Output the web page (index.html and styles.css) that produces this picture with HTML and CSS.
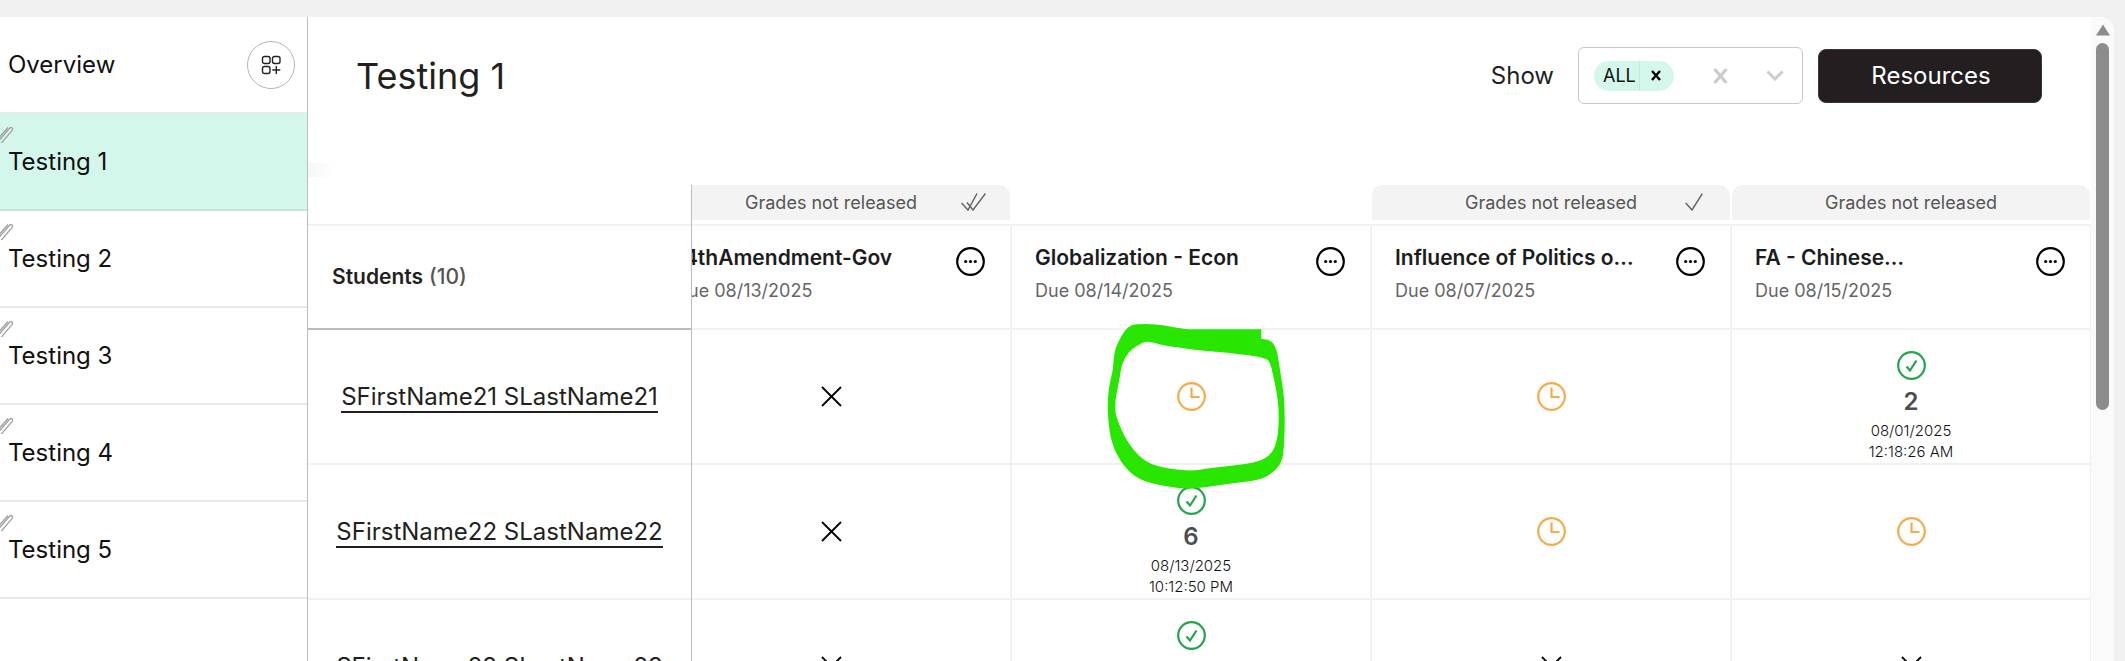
FILE: index.html
```html
<!DOCTYPE html>
<html lang="en">
<head>
<meta charset="utf-8">
<title>Testing 1</title>
<link rel="stylesheet" href="styles.css">
</head>
<body>
<svg width="0" height="0" class="defs">
  <symbol id="pin" viewBox="0 0 14 16"><path d="M-2 14.5 L9.600 1.200 a1.700 1.700 0 0 1 2.600 2.200 L1 16.500 M-4 14 L8 .5" fill="none" stroke="#a0a0a0" stroke-width="1.300"/></symbol>
  <symbol id="clock" viewBox="0 0 29 29"><circle cx="14.5" cy="14.5" r="13.300" fill="none" stroke="#f5ab4c" stroke-width="2.200"/><path d="M14.500 5.500v9.500h8" fill="none" stroke="#f5ab4c" stroke-width="2.200"/></symbol>
  <symbol id="done" viewBox="0 0 29 29"><circle cx="14.5" cy="14.5" r="13.300" fill="none" stroke="#22a54b" stroke-width="2.200"/><path d="M9.500 15.500l3.500 4L19.500 9.500" fill="none" stroke="#22a54b" stroke-width="2.200"/></symbol>
  <symbol id="no" viewBox="0 0 21 21"><path d="M1 1l19 19M20 1L1 20" fill="none" stroke="#000" stroke-width="1.800"/></symbol>
  <symbol id="more" viewBox="0 0 29 29"><circle cx="14.5" cy="14.5" r="13.300" fill="#fff" stroke="#000" stroke-width="2.200"/><circle cx="9.700" cy="14.500" r="1.600"/><circle cx="14.500" cy="14.500" r="1.600"/><circle cx="19.300" cy="14.500" r="1.600"/></symbol>
</svg>

<div class="topbar"></div>
<div class="panel">
  <aside class="sidebar">
    <div class="side-row overview">
      <span>Overview</span>
      <button class="round-btn" type="button" aria-label="Add">
        <svg width="20" height="20" viewBox="0 0 20 20" fill="none" stroke="#222" stroke-width="1.400"><rect x="1.500" y="1.500" width="7.500" height="7" rx="2"/><rect x="11.500" y="1.500" width="7.500" height="7" rx="2"/><rect x="1.500" y="11.500" width="7.500" height="7" rx="2"/><path d="M15.300 11v8M11.300 15h8"/></svg>
      </button>
    </div>
    <div class="side-row active"><svg class="pin"><use href="#pin"/></svg><span>Testing 1</span></div>
    <div class="side-row"><svg class="pin"><use href="#pin"/></svg><span>Testing 2</span></div>
    <div class="side-row"><svg class="pin"><use href="#pin"/></svg><span>Testing 3</span></div>
    <div class="side-row"><svg class="pin"><use href="#pin"/></svg><span>Testing 4</span></div>
    <div class="side-row"><svg class="pin"><use href="#pin"/></svg><span>Testing 5</span></div>
  </aside>

  <main class="main">
    <header class="head">
      <h1 class="title">Testing 1</h1>
      <div class="controls">
        <span class="show">Show</span>
        <div class="select">
          <span class="chip"><span class="chip-label">ALL</span><span class="chip-x">
            <svg width="10" height="11" viewBox="0 0 10 11"><path d="M1 1l8 9M9 1L1 10" stroke="#000" stroke-width="2.400" fill="none"/></svg></span></span>
          <svg class="sel-x" width="15" height="16" viewBox="0 0 15 16"><path d="M1.500 1l12 14M13.500 1l-12 14" stroke="#ccc" stroke-width="3.200" fill="none"/></svg>
          <svg class="sel-c" width="18" height="11" viewBox="0 0 18 11"><path d="M1.500 1.500L9 9l7.500-7.500" stroke="#ccc" stroke-width="3" fill="none"/></svg>
        </div>
        <button class="resources" type="button">Resources</button>
      </div>
    </header>

    <div class="table">
      <div class="students">
        <div class="students-head"><b>Students</b> <span class="count">(10)</span></div>
        <div class="name-cell"><a class="name">SFirstName21 SLastName21</a></div>
        <div class="name-cell"><a class="name">SFirstName22 SLastName22</a></div>
        <div class="name-cell"><a class="name">SFirstName23 SLastName23</a></div>
      </div>
      <div class="scroller">
        <div class="grid">
          <div class="banner">Grades not released
            <svg class="rel-icon" width="25" height="18" viewBox="0 0 25 18" fill="none" stroke="#666" stroke-width="1.500"><path d="M.5 10l6.500 7L16 .5M6 9.500L12 17 24.500 .5"/></svg>
          </div>
          <div class="banner none"></div>
          <div class="banner">Grades not released
            <svg class="rel-icon single" width="18" height="18" viewBox="0 0 18 18" fill="none" stroke="#666" stroke-width="1.500"><path d="M.7 10l6.300 7L17.300 .7"/></svg>
          </div>
          <div class="banner">Grades not released</div>

          <div class="col-head"><div class="col-text"><div class="col-title">14thAmendment-Gov</div><div class="due">Due 08/13/2025</div></div><svg class="more"><use href="#more"/></svg></div>
          <div class="col-head"><div class="col-text"><div class="col-title">Globalization - Econ</div><div class="due">Due 08/14/2025</div></div><svg class="more"><use href="#more"/></svg></div>
          <div class="col-head"><div class="col-text"><div class="col-title">Influence of Politics o…</div><div class="due">Due 08/07/2025</div></div><svg class="more"><use href="#more"/></svg></div>
          <div class="col-head"><div class="col-text"><div class="col-title">FA - Chinese…</div><div class="due">Due 08/15/2025</div></div><svg class="more"><use href="#more"/></svg></div>

          <div class="cell"><svg class="ic-no"><use href="#no"/></svg></div>
          <div class="cell"><svg class="ic"><use href="#clock"/></svg></div>
          <div class="cell"><svg class="ic"><use href="#clock"/></svg></div>
          <div class="cell sub"><svg class="ic"><use href="#done"/></svg><div class="score">2</div><div class="stamp">08/01/2025<br>12:18:26 AM</div></div>

          <div class="cell"><svg class="ic-no"><use href="#no"/></svg></div>
          <div class="cell sub"><svg class="ic"><use href="#done"/></svg><div class="score">6</div><div class="stamp">08/13/2025<br>10:12:50 PM</div></div>
          <div class="cell"><svg class="ic"><use href="#clock"/></svg></div>
          <div class="cell"><svg class="ic"><use href="#clock"/></svg></div>

          <div class="cell"><svg class="ic-no"><use href="#no"/></svg></div>
          <div class="cell sub"><svg class="ic"><use href="#done"/></svg></div>
          <div class="cell"><svg class="ic-no"><use href="#no"/></svg></div>
          <div class="cell"><svg class="ic-no"><use href="#no"/></svg></div>
        </div>
      </div>
    </div>
  </main>

  <div class="scrollbar">
    <svg width="14" height="12" viewBox="0 0 14 12"><path d="M7 .5L14 11.500H0z" fill="#8c8c8c"/></svg>
    <div class="thumb"></div>
  </div>
</div>

<svg class="ink" width="240" height="200" viewBox="0 0 720 600"><path fill="#28e600" fill-rule="evenodd" d="M197 72Q230 72 275 80Q320 88 330 88L544 88L544 116Q575 118 582 135Q590 145 595 178Q600 210 607 255Q615 300 614 380Q612 460 606 478Q600 495 588 508Q575 520 558 530Q540 540 490 546Q440 552 385 560Q330 568 295 564Q260 560 225 552Q190 545 165 528Q140 510 122 482Q105 455 98 432Q90 410 86 370Q82 330 84 298Q85 265 92 238Q100 210 101 180Q103 150 114 128Q125 105 135 92Q145 80 155 76Q165 72 197 72ZM170 138Q150 150 138 170Q125 190 122 215Q118 240 110 280Q102 320 108 345Q115 370 132 405Q150 440 178 468Q205 495 262 505Q320 515 360 509Q400 503 465 496Q530 488 552 476Q575 465 585 438Q595 410 596 365Q597 320 591 285Q585 250 578 220Q572 190 564 181Q555 172 498 165Q440 158 390 154Q340 150 290 142Q240 135 228 130Q215 125 202 125Q190 125 170 138Z"/></svg>
</body>
</html>
```

FILE: styles.css
```css
* { box-sizing: border-box; }
html, body { height: 100%; }
body {
  margin: 0;
  background: #f1f1f1;
  font-family: Inter, "Liberation Sans", sans-serif;
  color: #231f20;
  overflow: hidden;
  position: relative;
}
.defs { position: absolute; }
.topbar { height: 17px; }
.panel {
  display: flex;
  height: 644px;
  margin-right: 11px;
  background: #fff;
  border-top-right-radius: 14px;
  overflow: hidden;
}

/* sidebar */
.sidebar { width: 308px; flex: none; border-right: 1px solid #bcbcbc; }
.side-row {
  position: relative;
  display: flex;
  align-items: center;
  height: 97px;
  padding-left: 8px;
  font-size: 24px;
  color: #111;
  border-bottom: 2px solid #e9e9e9;
}
.overview { justify-content: space-between; padding-right: 12px; border-bottom-color: #e4ece9; }
.active { background: #d4f7ec; border-bottom-color: #c4e6db; }
.pin { position: absolute; left: 0; top: 13px; width: 14px; height: 16px; }
.round-btn {
  display: flex;
  align-items: center;
  justify-content: center;
  width: 48px;
  height: 48px;
  padding: 0;
  background: #fff;
  border: 1px solid #b5b5b5;
  border-radius: 50%;
}

/* main header */
.main { width: 1783px; flex: none; }
.head {
  display: flex;
  justify-content: space-between;
  align-items: flex-start;
  height: 168px;
  padding: 30px 49px 30px 48px;
}
.title { margin: 0; font-size: 36px; font-weight: 400; line-height: 58px; }
.controls { display: flex; align-items: center; height: 57px; }
.show { font-size: 24px; margin-right: 24px; }
.select {
  display: flex;
  align-items: center;
  width: 225px;
  height: 57px;
  padding-left: 15px;
  border: 1px solid #c8c8c8;
  border-radius: 6px;
  margin-right: 15px;
}
.chip {
  display: flex;
  height: 30px;
  width: 80px;
  background: #d4f7ec;
  border-radius: 15px;
  font-size: 18px;
  line-height: 30px;
  color: #111;
}
.chip-label { width: 46px; padding-left: 9px; border-right: 1px solid #c2ebdc; }
.chip-x { flex: 1; display: flex; align-items: center; justify-content: center; padding-right: 3px; }
.sel-x { margin-left: 39px; }
.sel-c { margin-left: 38px; }
.resources {
  width: 224px;
  height: 54px;
  background: #231f20;
  color: #fff;
  border: 1px solid #3a3637;
  border-radius: 8px;
  font: 400 24px Inter, "Liberation Sans", sans-serif;
  padding-left: 8px;
}

/* table */
.table { display: flex; height: 476px; }
.students { position: relative; width: 384px; flex: none; padding-top: 39px; border-right: 1px solid #bcbcbc; }
.students::before {
  content: "";
  position: absolute;
  left: 0;
  top: -22px;
  width: 27px;
  height: 14px;
  background: linear-gradient(90deg, #f7f7f7, #fff);
}
.students-head {
  display: flex;
  align-items: center;
  gap: 6px;
  height: 106px;
  padding: 0 0 2px 24px;
  font-size: 21px;
  border-top: 2px solid #f1f1f1;
  border-bottom: 2px solid #bcbcbc;
}
.students-head b { font-weight: 600; }
.count { color: #555; font-weight: 500; }
.name-cell {
  display: flex;
  align-items: center;
  justify-content: center;
  height: 135px;
  border-bottom: 2px solid #f1f1f1;
}
.name {
  margin-top: 2px;
  font-size: 24px;
  font-weight: 400;
  line-height: 28px;
  border-bottom: 2px solid #231f20;
}
.scroller { width: 1399px; flex: none; overflow: hidden; }
.grid {
  display: grid;
  grid-template-columns: repeat(4, 360px);
  grid-template-rows: 39px 106px repeat(3, 135px);
  margin-left: -40px;
}

.banner {
  position: relative;
  height: 35px;
  margin-right: 2px;
  background: #f3f3f3;
  border-radius: 10px 10px 0 0;
  font-size: 18px;
  line-height: 35px;
  text-align: center;
  color: #555;
}
.banner.none { background: none; }
.rel-icon { position: absolute; right: 24px; top: 8px; }
.rel-icon.single { right: 27px; }

.col-head {
  display: flex;
  height: 106px;
  padding: 20px 25px 0 23px;
  justify-content: space-between;
  border-top: 2px solid #f1f1f1;
  border-right: 2px solid #f1f1f1;
  border-bottom: 2px solid #f1f1f1;
}
.col-title { font-size: 21px; font-weight: 600; line-height: 24px; color: #1c1c1c; white-space: nowrap; }
.due { margin-top: 9px; font-size: 18px; line-height: 24px; color: #666; }
.more { width: 29px; height: 29px; flex: none; margin-top: 1px; }

.cell {
  display: flex;
  flex-direction: column;
  align-items: center;
  justify-content: center;
  height: 135px;
  border-right: 2px solid #f1f1f1;
  border-bottom: 2px solid #f1f1f1;
}
.cell.sub { justify-content: flex-start; padding-top: 21px; }
.ic { width: 29px; height: 29px; flex: none; }
.ic-no { width: 21px; height: 21px; flex: none; }
.score { margin-top: 8px; font-size: 24px; font-weight: 600; line-height: 28px; color: #4d4d4d; }
.stamp { margin-top: 4px; font-size: 15px; font-weight: 300; line-height: 21px; text-align: center; color: #111; }

/* scrollbar */
.scrollbar {
  width: 23px;
  flex: none;
  display: flex;
  flex-direction: column;
  align-items: center;
  padding-top: 7px;
  background: #fafafa;
}
.thumb { width: 13px; height: 367px; margin-top: 7px; background: #8c8c8c; border-radius: 7px; }

/* marker scribble drawn over the screenshot */
.ink { position: absolute; left: 1080px; top: 300px; }
```
